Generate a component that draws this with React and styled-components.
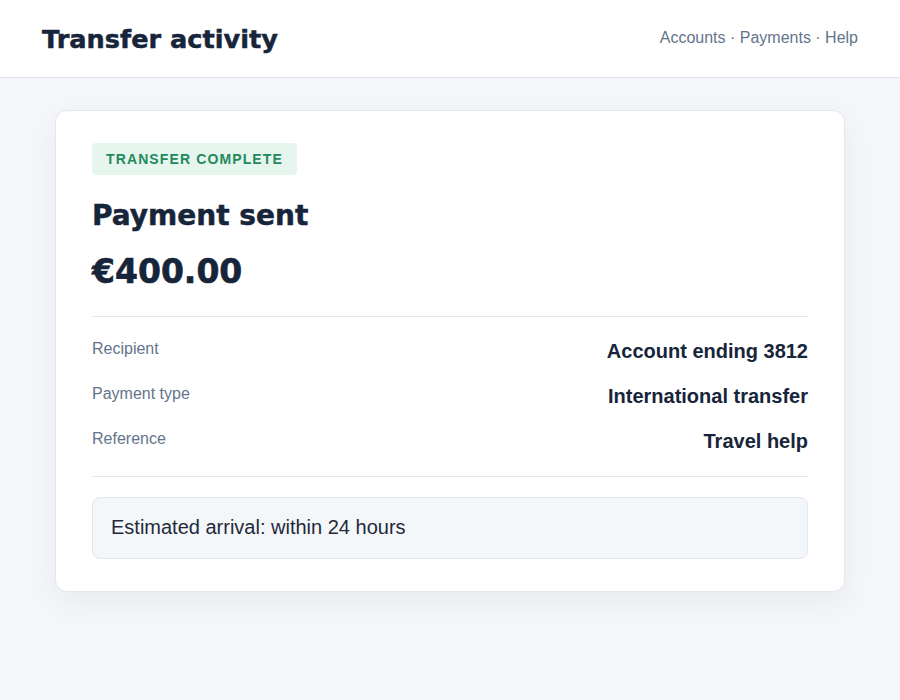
import React from 'react'
import styled, { createGlobalStyle } from 'styled-components'

const GlobalStyle = createGlobalStyle`
  * { box-sizing: border-box; }
  html, body {
    margin: 0;
    padding: 0;
    background: #f4f6f9;
    font-family: "Liberation Sans", Arial, sans-serif;
    color: #1e293b;
  }
`

const details = [
  { label: 'Recipient', value: 'Account ending 3812' },
  { label: 'Payment type', value: 'International transfer' },
  { label: 'Reference', value: 'Travel help' },
]

function App() {
  return (
    <Page>
      <GlobalStyle />
      <Header>
        <Title>Transfer activity</Title>
        <Nav>Accounts · Payments · Help</Nav>
      </Header>
      <Main>
        <Card>
          <Badge>Transfer complete</Badge>
          <Heading>Payment sent</Heading>
          <Amount>€400.00</Amount>
          <Details>
            {details.map((d) => (
              <Row key={d.label}>
                <Label>{d.label}</Label>
                <Value>{d.value}</Value>
              </Row>
            ))}
          </Details>
          <Note>Estimated arrival: within 24 hours</Note>
        </Card>
      </Main>
    </Page>
  )
}

const Page = styled.div`
  min-height: 700px;
  background: #f4f6f9;
`

const Header = styled.header`
  display: flex;
  align-items: center;
  justify-content: space-between;
  height: 78px;
  padding: 0 42px;
  background: #fff;
  border-bottom: 1px solid #dfe3e8;
`

const Title = styled.h1`
  margin: 0;
  font-family: "DejaVu Sans", Verdana, sans-serif;
  font-size: 25.6px;
  font-weight: 700;
  color: #17253a;
  -webkit-text-stroke: 0.5px #17253a;
`

const Nav = styled.nav`
  font-size: 16px;
  color: #64748b;
  padding-bottom: 2px;
`

const Main = styled.main`
  padding: 32px 55px;
`

const Card = styled.section`
  max-width: 790px;
  margin: 0 auto;
  background: #fff;
  border: 1px solid #e2e8f0;
  border-radius: 12px;
  padding: 32px 36px;
  box-shadow: 0 10px 30px rgba(15, 23, 42, 0.05);
`

const Badge = styled.span`
  display: inline-block;
  padding: 8px 14px;
  border-radius: 4px;
  background: #e6f5ed;
  color: #1f8a5c;
  font-size: 14px;
  font-weight: 700;
  letter-spacing: 0.08em;
  text-transform: uppercase;
`

const Heading = styled.h2`
  margin: 24px 0 0;
  font-family: "DejaVu Sans", Verdana, sans-serif;
  font-size: 28px;
  font-weight: 700;
  color: #17253a;
  -webkit-text-stroke: 0.5px #17253a;
`

const Amount = styled.div`
  margin: 20px 0 25px;
  font-family: "DejaVu Sans", Verdana, sans-serif;
  font-size: 33px;
  font-weight: 700;
  color: #17253a;
  -webkit-text-stroke: 0.6px #17253a;
`

const Details = styled.div`
  display: flex;
  flex-direction: column;
  gap: 22px;
  padding: 23px 0;
  border-top: 1px solid #e2e8f0;
  border-bottom: 1px solid #e2e8f0;
`

const Row = styled.div`
  display: flex;
  align-items: flex-start;
  justify-content: space-between;
`

const Label = styled.span`
  font-size: 16px;
  color: #64748b;
`

const Value = styled.span`
  font-size: 20px;
  font-weight: 700;
  color: #17253a;
`

const Note = styled.div`
  margin-top: 20px;
  padding: 18px 18px 19px;
  background: #f4f7fa;
  border: 1px solid #e2e8f0;
  border-radius: 8px;
  font-size: 20px;
  color: #1e293b;
`

export default App
